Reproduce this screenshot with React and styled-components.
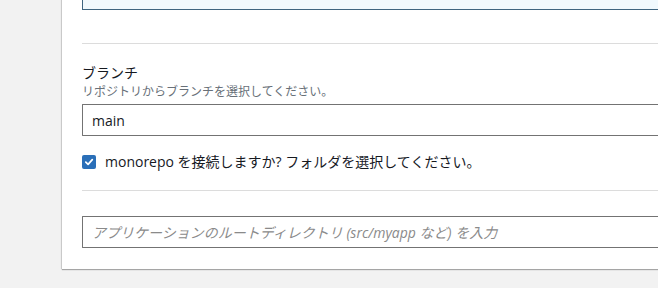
import styled, { createGlobalStyle } from "styled-components";

const GlobalStyle = createGlobalStyle`
  html, body {
    margin: 0;
    padding: 0;
    background: #f2f2f2;
    overflow: hidden;
  }
  body {
    font-family: "Open Sans", "Noto Sans CJK JP", sans-serif;
  }
`;

export default function App() {
  return (
    <>
      <GlobalStyle />
      <Page>
        <Card>
          <SelectedTile />
          <Divider $top={33} />
          <Field>
            <Label>ブランチ</Label>
            <Hint>リポジトリからブランチを選択してください。</Hint>
            <TextBox>main</TextBox>
          </Field>
          <CheckRow>
            <CheckBox>
              <svg width="10" height="10" viewBox="0 0 10 10">
                <path
                  d="M1.8 5.2 L4.1 7.4 L8.3 2.6"
                  fill="none"
                  stroke="#fff"
                  strokeWidth="1.7"
                  strokeLinecap="round"
                  strokeLinejoin="round"
                />
              </svg>
            </CheckBox>
            <CheckLabel>
              monorepo を接続しますか? フォルダを選択してください。
            </CheckLabel>
          </CheckRow>
          <Divider $top={18} />
          <TextBox $placeholder $top={25}>
            アプリケーションのルートディレクトリ (src/myapp など) を入力
          </TextBox>
        </Card>
      </Page>
    </>
  );
}

const Page = styled.div`
  width: 658px;
  height: 288px;
  overflow: hidden;
`;

const Card = styled.div`
  margin-left: 62px;
  margin-top: -30px;
  width: 660px;
  padding: 0 0 21px 20px;
  background: #fff;
  box-shadow: 0 1px 1px rgba(0, 0, 0, 0.3), -1px 0 1px rgba(0, 0, 0, 0.12);
`;

const SelectedTile = styled.div`
  height: 38px;
  background: #f1f9fd;
  border: 1px solid #3f6580;
  border-right: none;
`;

const Divider = styled.div`
  margin-top: ${(p) => p.$top}px;
  height: 1px;
  background: #dcdcdc;
`;

const Field = styled.div`
  display: flex;
  flex-direction: column;
  padding-top: 19px;
`;

const Label = styled.div`
  font-size: 14px;
  line-height: 20px;
  color: #16191f;
`;

const Hint = styled.div`
  font-size: 12px;
  line-height: 18px;
  color: #687078;
`;

const TextBox = styled.div`
  margin-top: ${(p) => p.$top ?? 3}px;
  height: 30px;
  display: flex;
  align-items: center;
  padding-left: 9px;
  border: 1px solid #737373;
  border-right: none;
  border-radius: 1px;
  font-size: 14px;
  color: ${(p) => (p.$placeholder ? "#8a8a8a" : "#16191f")};
  font-style: ${(p) => (p.$placeholder ? "italic" : "normal")};
  background: #fff;
`;

const CheckRow = styled.div`
  display: flex;
  align-items: center;
  gap: 9px;
  margin-top: 16px;
  height: 20px;
`;

const CheckBox = styled.span`
  width: 14px;
  height: 14px;
  border-radius: 2px;
  background: #2a6fb8;
  display: flex;
  align-items: center;
  justify-content: center;
`;

const CheckLabel = styled.span`
  font-size: 14px;
  line-height: 20px;
  color: #16191f;
`;
